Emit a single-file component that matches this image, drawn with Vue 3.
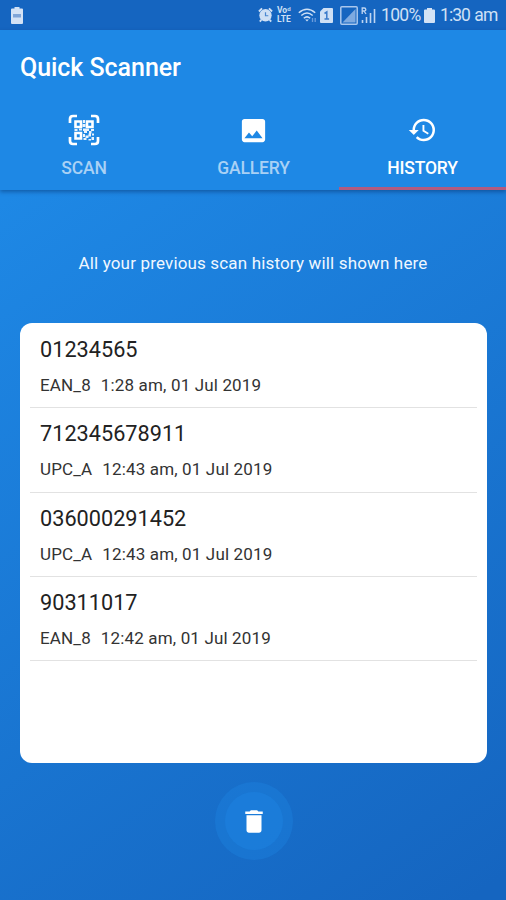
<script setup>
const tabs = [
  { id: 'scan', label: 'SCAN' },
  { id: 'gallery', label: 'GALLERY' },
  { id: 'history', label: 'HISTORY' },
]
const active = 'history'
const records = [
  { code: '01234565', type: 'EAN_8', time: '1:28 am, 01 Jul 2019' },
  { code: '712345678911', type: 'UPC_A', time: '12:43 am, 01 Jul 2019' },
  { code: '036000291452', type: 'UPC_A', time: '12:43 am, 01 Jul 2019' },
  { code: '90311017', type: 'EAN_8', time: '12:42 am, 01 Jul 2019' },
]
</script>

<template>
  <div class="screen">
    <div class="status">
      <svg class="batt-left" width="12" height="17" viewBox="0 0 12 17">
        <path d="M3.500 0h5v1.500H11a1 1 0 0 1 1 1V16a1 1 0 0 1-1 1H1a1 1 0 0 1-1-1V2.500a1 1 0 0 1 1-1h2.500z" fill="#d3e2f5" />
        <path d="M2 7h8v3.500H2z" fill="#7fa5d8" />
      </svg>
      <div class="status-right">
        <svg class="alarm" width="15" height="16" viewBox="0 0 16 16">
          <path d="M1 4.300 4.300 1M15 4.300 11.700 1M3.500 13 2 15M12.500 13l1.500 2" stroke="#cfe0f5" stroke-width="2" />
          <circle cx="8" cy="8.300" r="6.600" fill="#cfe0f5" />
          <path d="M8 5v3.800h3" fill="none" stroke="#4a87d0" stroke-width="1.300" />
        </svg>
        <div class="volte"><span>Voᵈ</span><span>LTE</span></div>
        <svg class="wifi" width="19" height="15" viewBox="0 0 19 15" fill="none" stroke="#cfe0f5" stroke-width="1.500">
          <path d="M.8 4.800Q9 -2.300 17.200 4.800M3.300 7.500Q9 2.600 14.700 7.500M5.800 10.200Q9 7.500 12.200 10.200" />
          <path d="M7.200 11.500h3.600L9 13.500z" fill="#cfe0f5" stroke="none" />
          <path d="M14.500 10v4M17.200 10v4" stroke="#6b9bdb" stroke-width="1.300" />
        </svg>
        <svg class="sim" width="13" height="15" viewBox="0 0 13 15">
          <path d="M3.500 0H12a1 1 0 0 1 1 1v13a1 1 0 0 1-1 1H1a1 1 0 0 1-1-1V3.500z" fill="#cfe0f5" />
          <path d="M4.500 5.500 6.800 4v7M4.500 11h4.600" fill="none" stroke="#3c7bca" stroke-width="1.500" />
        </svg>
        <svg class="nosim" width="18" height="19" viewBox="0 0 18 19">
          <rect x=".8" y=".8" width="16.400" height="17.400" rx="1" fill="none" stroke="#a9c7ed" stroke-width="1.500" />
          <path d="M15.500 3v13.500H2.500z" fill="#7eaae0" />
        </svg>
        <svg class="signal" width="15" height="16" viewBox="0 0 15 16" fill="none" stroke="#bfd5f2">
          <path d="M1.200 7V1h2q1.600 0 1.600 1.500T3.200 4H1.200M3 4l2 3" stroke-width="1.300" />
          <path d="M1.500 13v3M5.500 10v6M9.500 6v10M13.500 2v14" stroke-width="1.600" />
        </svg>
        <span class="pct">100%</span>
        <svg class="batt" width="11" height="15" viewBox="0 0 11 15">
          <path d="M3 0h5v1.500h2a1 1 0 0 1 1 1V14a1 1 0 0 1-1 1H1a1 1 0 0 1-1-1V2.500a1 1 0 0 1 1-1h2z" fill="#d3e2f5" />
        </svg>
        <span class="clock">1:30 am</span>
      </div>
    </div>

    <header class="bar">
      <h1><span>Quick Scanner</span></h1>
      <nav>
        <div v-for="t in tabs" :key="t.id" class="tab" :class="[t.id, { active: t.id === active }]">
          <div class="ico">
            <svg v-if="t.id === 'scan'" width="32" height="32" viewBox="0 0 32 32">
              <path d="M2 9V5q0-3 3-3h4M23 2h4q3 0 3 3v4M30 23v4q0 3-3 3h-4M9 30H5q-3 0-3-3v-4" fill="none" stroke="#fff" stroke-width="2.700" />
              <path d="M7.500 7.500h5.500v5.500h-5.500zM19 7.500h5.500v5.500H19zM7.500 19h5.500v5.500h-5.500z" fill="none" stroke="#fff" stroke-width="2.600" />
              <path d="M15 6h2v3h-2zM14.500 10h3v3h-3zM6.500 15h3v2h-3zM11 14.500h3v2h-3zM15 14.500h6v2.500h-2v2h-3v-2h-1zM23 15h3v2h-3zM21 17h2.500v2.500H21zM15 20h2v3h-2zM17.500 21.500h3v-2H23v3h-2.500v1.500h-2v2H15.500v-2h2zM24 19.500h2v2h-2zM23.500 23h2.500v3h-2.500zM20.500 25H23v1.500h-2.500z" fill="#e9f3fd" />
            </svg>
            <svg v-else-if="t.id === 'gallery'" width="31" height="31" viewBox="0 0 24 24">
              <path d="M21 19V5c0-1.100-.9-2-2-2H5c-1.100 0-2 .9-2 2v14c0 1.100.9 2 2 2h14c1.100 0 2-.9 2-2zM8.500 13.500l2.500 3.010L14.500 12l4.500 6H5l3.500-4.500z" fill="#fff" />
            </svg>
            <svg v-else width="31" height="30" viewBox="0 0 24 24">
              <path d="M13 3a9 9 0 0 0-9 9H1l3.890 3.890.07.14L9 12H6c0-3.870 3.130-7 7-7s7 3.130 7 7-3.130 7-7 7c-1.930 0-3.680-.79-4.940-2.060l-1.420 1.420A8.954 8.954 0 0 0 13 21a9 9 0 0 0 0-18zm-1 5v5l4.280 2.540.72-1.210-3.500-2.080V8H12z" fill="#fff" />
            </svg>
          </div>
          <span class="lbl">{{ t.label }}</span>
        </div>
      </nav>
    </header>

    <main>
      <p class="hint"><span>All your previous scan history will shown here</span></p>
      <section class="card">
        <article v-for="r in records" :key="r.code" class="row">
          <div class="code">{{ r.code }}</div>
          <div class="meta"><span>{{ r.type }}</span><span>{{ r.time }}</span></div>
        </article>
      </section>
      <button class="del" aria-label="Delete">
        <span class="inner">
          <svg width="30" height="31" viewBox="0 0 24 24">
            <path d="M6 19c0 1.100.9 2 2 2h8c1.100 0 2-.9 2-2V7H6v12zM19 4h-3.500l-1-1h-5l-1 1H5v2h14V4z" fill="#fff" />
          </svg>
        </span>
      </button>
    </main>
  </div>
</template>

<style>
body {
  margin: 0;
}
</style>

<style scoped>
.screen {
  width: 506px;
  height: 900px;
  overflow: hidden;
  display: flex;
  flex-direction: column;
  font-family: Roboto, sans-serif;
  background: linear-gradient(145deg, #1e88e5 16%, #1565c0 98%);
}
.status {
  height: 30px;
  box-sizing: border-box;
  background: #1565c0;
  display: flex;
  justify-content: space-between;
  align-items: center;
  padding: 0 9px 0 11px;
  color: #cfe0f5;
  flex: none;
}
.status-right {
  display: flex;
  align-items: center;
  white-space: nowrap;
}
.status-right svg {
  flex: none;
}
.volte {
  display: flex;
  flex-direction: column;
  width: 17px;
  margin: 0 4px 0 4px;
  font-size: 8.500px;
  line-height: 9px;
  font-weight: 700;
}
.wifi { margin-right: 3px; }
.sim { margin-right: 7px; }
.nosim { margin-right: 3px; }
.signal { margin-right: 5px; }
.pct {
  font-size: 17.500px;
  width: 39px;
  letter-spacing: -0.700px;
  margin-right: 4px;
}
.batt { margin-right: 5px; }
.clock {
  font-size: 17.500px;
  width: 57px;
  letter-spacing: -0.950px;
  word-spacing: 1px;
}
.bar {
  height: 160px;
  flex: none;
  background: #1e88e5;
  box-shadow: 0 2px 4px rgba(0, 30, 80, 0.4);
  color: #fff;
  display: flex;
  flex-direction: column;
}
h1 {
  margin: 0;
  height: 76px;
  line-height: 75px;
  padding-left: 20px;
  font-size: 25px;
  letter-spacing: -0.050px;
  font-weight: 500;
}
nav {
  flex: 1;
  display: grid;
  grid-template-columns: 168px 171px 167px;
}
.tab {
  display: flex;
  flex-direction: column;
  align-items: center;
  border-bottom: 3px solid transparent;
  color: #a9d1f5;
}
.tab.active {
  color: #fff;
  border-bottom-color: #b15b80;
}
.ico {
  height: 48px;
  display: flex;
  align-items: center;
}
.lbl {
  font-size: 17.500px;
  line-height: 28px;
  font-weight: 500;
  letter-spacing: -0.150px;
}
main {
  flex: 1;
  display: flex;
  flex-direction: column;
  align-items: center;
}
.hint {
  margin: 62px 0 49px;
  font-size: 17px;
  letter-spacing: 0.160px;
  line-height: 22px;
  color: #eff7ff;
}
.card {
  width: 467px;
  height: 440px;
  box-sizing: border-box;
  margin-left: 1px;
  padding: 1px 10px 0;
  background: #fff;
  border-radius: 12px;
  flex: none;
}
.row {
  height: 84.300px;
  box-sizing: border-box;
  border-bottom: 1.500px solid #e2e2e2;
  padding: 12px 10px 0;
}
.code {
  font-size: 21.700px;
  line-height: 28px;
  color: #222;
}
.meta {
  margin-top: 10px;
  display: flex;
  gap: 10px;
  font-size: 17px;
  letter-spacing: 0.150px;
  line-height: 22px;
  color: #333;
}
.del {
  margin: 19px 0 0 1px;
  width: 78px;
  height: 78px;
  padding: 0;
  border: 0;
  border-radius: 50%;
  background: rgba(30, 136, 229, 0.32);
  display: flex;
  align-items: center;
  justify-content: center;
}
.inner {
  width: 58px;
  height: 58px;
  border-radius: 50%;
  background: rgba(30, 136, 229, 0.4);
  display: flex;
  align-items: center;
  justify-content: center;
}
</style>
